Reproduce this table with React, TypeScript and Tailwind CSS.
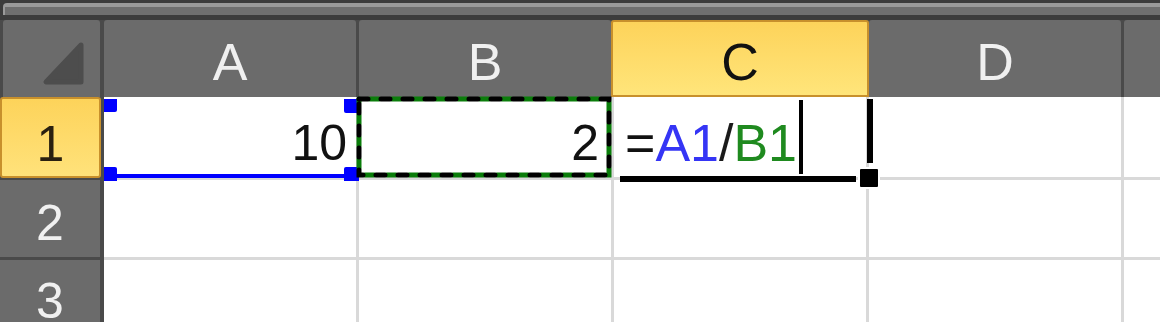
import React from 'react'

const cols = ['A', 'B', 'C', 'D', 'E']

function ColHeader({ label }: { label: string }) {
  if (label === 'C') {
    return (
      <div className="-mx-[3px] flex w-[258px] shrink-0 items-center justify-center rounded-t-[3px] border-[2px] border-[#c8902c] bg-gradient-to-b from-[#fdd35a] to-[#ffe57a] pt-[7px] text-[52px] leading-none text-[#111]">
        {label}
      </div>
    )
  }
  // E sits mostly off screen, so its letter is not visible
  return (
    <div className="flex w-[252px] shrink-0 items-center justify-center rounded-t-[3px] bg-[#6b6b6b] pt-[7px] text-[52px] leading-none text-[#f0f0f0]">
      {label === 'E' ? '' : label}
    </div>
  )
}

function RowHeader({ n, active, pt }: { n: number; active?: boolean; pt: string }) {
  if (active) {
    return (
      <div
        className={`flex h-full w-[101px] items-center justify-center rounded-[3px] border-[2px] border-[#c8902c] bg-gradient-to-b from-[#fdd35a] to-[#ffe27a] text-[50px] leading-none text-[#2a2010] ${pt}`}
      >
        {n}
      </div>
    )
  }
  return (
    <div
      className={`flex h-full w-[100px] items-center justify-center bg-[#6b6b6b] text-[50px] leading-none text-[#f0f0f0] ${pt}`}
    >
      {n}
    </div>
  )
}

function MarchingAnts() {
  return (
    <svg
      className="pointer-events-none absolute -left-[3px] -top-[1px] z-10 overflow-visible"
      width="256"
      height="82"
      viewBox="0 0 256 82"
      fill="none"
    >
      <rect x="3" y="3" width="250" height="76" stroke="#ff8ce8" strokeWidth="4" />
      <rect
        x="3"
        y="3"
        width="250"
        height="76"
        stroke="#0a7d0a"
        strokeWidth="5"
        strokeDasharray="9 13"
        strokeDashoffset="11"
        strokeLinecap="round"
      />
      <rect
        x="3"
        y="3"
        width="250"
        height="76"
        stroke="#000"
        strokeWidth="5"
        strokeDasharray="9 13"
        strokeLinecap="round"
      />
    </svg>
  )
}

export default function App() {
  return (
    <div className="h-[322px] w-[1160px] overflow-hidden bg-[#4a4a4a] font-['Liberation_Sans',Arial,sans-serif]">
      {/* ribbon edge */}
      <div className="flex h-[20px] flex-col bg-[#3c3c3c] pt-[3px]">
        <div className="ml-[3px] h-[12px] rounded-tl-[4px] border-l-[2px] border-t-[4px] border-[#9a9a9a] bg-[#6f6f6f]" />
      </div>

      {/* column headers */}
      <div className="flex h-[77px] gap-[3px]">
        <div className="relative ml-[3px] mr-[1px] w-[97px] shrink-0 rounded-t-[3px] bg-[#6b6b6b]">
          <svg className="absolute left-0 top-0" width="97" height="77" viewBox="0 0 97 77">
            <polygon
              points="43,62 78,62 78,25"
              fill="#4d4d4d"
              stroke="#4d4d4d"
              strokeWidth="5"
              strokeLinejoin="round"
            />
          </svg>
        </div>
        {cols.map((c) => (
          <ColHeader key={c} label={c} />
        ))}
      </div>

      {/* row 1 */}
      <div className="flex h-[83px]">
        <div className="h-full w-[104px] shrink-0 pb-[2px]">
          <RowHeader n={1} active pt="pt-[12px]" />
        </div>
        <div className="flex flex-1 gap-[3px] bg-[#d9d9d9] pb-[3px]">
          {/* A1 */}
          <div className="relative flex w-[252px] shrink-0 items-center justify-end bg-white pr-[9px] pt-[12px] text-[50px] leading-none text-[#111]">
            10
            <div className="absolute bottom-[-1px] left-0 right-[-2px] z-10 h-[4px] bg-[#0000ff]" />
            <div className="absolute left-0 top-[2px] z-10 h-[13px] w-[13px] rounded-br-[2px] bg-[#0000ff]" />
            <div className="absolute bottom-[-4px] left-0 z-10 h-[14px] w-[13px] rounded-tr-[2px] bg-[#0000ff]" />
            <div className="absolute right-[-3px] top-[2px] z-10 h-[14px] w-[15px] rounded-bl-[2px] bg-[#0000ff]" />
            <div className="absolute bottom-[-4px] right-[-3px] z-10 h-[14px] w-[15px] rounded-tl-[2px] bg-[#0000ff]" />
          </div>
          {/* B1 */}
          <div className="relative flex w-[252px] shrink-0 items-center justify-end bg-white pr-[12px] pt-[12px] text-[50px] leading-none text-[#111]">
            2
            <MarchingAnts />
          </div>
          {/* C1 */}
          <div className="relative flex w-[252px] shrink-0 items-stretch bg-white pl-[11px]">
            <div className="flex items-center pt-[12px] text-[52px] leading-none">
              <span className="text-[#111]">=</span>
              <span className="text-[#3535f5]">A1</span>
              <span className="text-[#1a1a1a]">/</span>
              <span className="text-[#1f8a1f]">B1</span>
            </div>
            <div className="my-[3px] ml-[2px] w-[4px] bg-black" />
            <div className="absolute right-[-7px] top-[2px] z-10 h-[64px] w-[6px] bg-black" />
            <div className="absolute bottom-[-5px] left-[6px] z-10 h-[6px] w-[236px] bg-black" />
            <div className="absolute bottom-[-12px] right-[-14px] z-20 h-[22px] w-[22px] rounded-[3px] border-[2px] border-white bg-black" />
          </div>
          <div className="w-[252px] shrink-0 bg-white" />
          <div className="w-[252px] shrink-0 bg-white" />
        </div>
      </div>

      {/* row 2 */}
      <div className="flex h-[80px]">
        <div className="h-full w-[104px] shrink-0 pb-[3px]">
          <RowHeader n={2} pt="pt-[8px]" />
        </div>
        <div className="flex flex-1 gap-[3px] bg-[#d9d9d9] pb-[3px]">
          {cols.map((c) => (
            <div key={c} className="w-[252px] shrink-0 bg-white" />
          ))}
        </div>
      </div>

      {/* row 3 */}
      <div className="flex h-[80px]">
        <div className="h-full w-[104px] shrink-0 pb-[3px]">
          <RowHeader n={3} pt="pt-[4px]" />
        </div>
        <div className="flex flex-1 gap-[3px] bg-[#d9d9d9] pb-[3px]">
          {cols.map((c) => (
            <div key={c} className="w-[252px] shrink-0 bg-white" />
          ))}
        </div>
      </div>
    </div>
  )
}
